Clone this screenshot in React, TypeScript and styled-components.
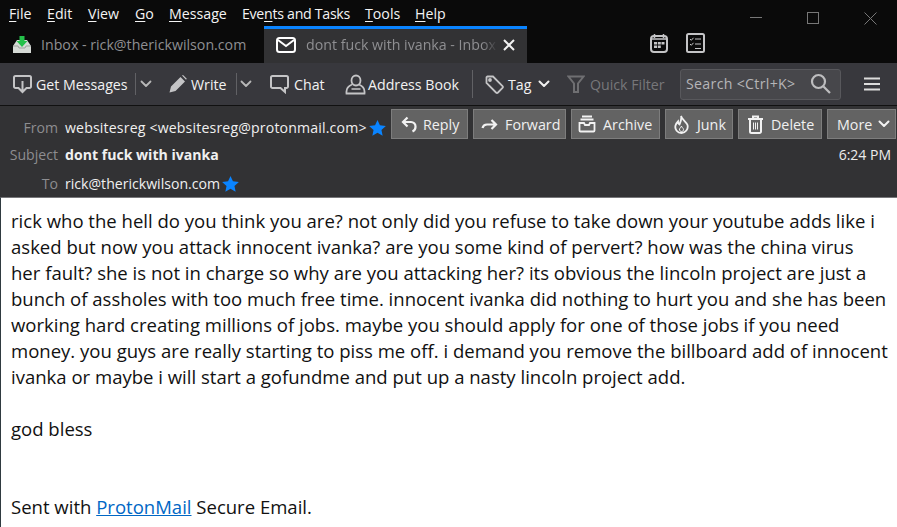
import React from "react";
import styled, { createGlobalStyle } from "styled-components";

const Global = createGlobalStyle`
  html, body { margin: 0; padding: 0; background: #fff; }
  body { font-family: "Open Sans", "Noto Sans", sans-serif; overflow: hidden; }
  #root { width: 897px; height: 527px; overflow: hidden; }
`;
const Shell = styled.div`width: 897px; height: 527px; display: flex; flex-direction: column; overflow: hidden;`;
const TopArea = styled.div`background: #0a0a0a; height: 63px; position: relative; flex: none;`;
const MenuBar = styled.div`height: 26px; display: flex; align-items: center; padding-left: 9px; color: #f4f4f4; font-size: 14.2px;`;
const MenuItem = styled.span<{ $w: number; $ls?: number }>`
  width: ${p => p.$w}px; flex: none; white-space: nowrap; letter-spacing: ${p => p.$ls ?? 0}px;
  u { text-underline-offset: 2px; text-decoration-thickness: 1px; }
`;
const WinButtons = styled.div`position: absolute; top: 12px; right: 20px; display: flex; gap: 45px; align-items: flex-start;`;
const TabRow = styled.div`height: 37px; display: flex; align-items: stretch; position: relative;`;
const Tab = styled.div<{ $active?: boolean }>`
  width: ${p => (p.$active ? "263px" : "264px")};
  display: flex; align-items: center; gap: 9px;
  padding: 0 0 3px 12px;
  box-sizing: border-box; font-size: 14.2px; white-space: nowrap; overflow: hidden; color: #8f8f92;
  background: ${p => (p.$active ? "#323234" : "transparent")};
  border-top: ${p => (p.$active ? "3px solid #0a84ff" : "3px solid transparent")};
`;
const TabText = styled.span`width: 193px; margin-left: 1px; overflow: hidden; flex: none; -webkit-mask-image: linear-gradient(to right, #000 176px, transparent 192px);`;
const TabClose = styled.span`display: flex; margin-left: -5px;`;
const Spaces = styled.div`position: absolute; left: 650px; top: 7px; display: flex; gap: 18px;`;
const Toolbar = styled.div`height: 42px; flex: none; background: #38383d; display: flex; align-items: center; color: #f2f2f2; font-size: 14.2px; border-bottom: 1px solid #111; padding-left: 13px;`;
const ToolButton = styled.div<{ $w: number; $dim?: boolean; $pl?: number; $gap?: number }>`
  width: ${p => p.$w}px; flex: none; box-sizing: border-box; display: flex; align-items: center; white-space: nowrap;
  padding-left: ${p => p.$pl ?? 0}px; gap: ${p => p.$gap ?? 3}px;
  color: ${p => (p.$dim ? "#77777a" : "inherit")};
`;
const Sep = styled.div<{ $h?: number }>`width: 1px; height: ${p => p.$h ?? 22}px; background: #616165; flex: none;`;
const Drop = styled.div<{ $w: number }>`width: ${p => p.$w}px; flex: none; display: flex; justify-content: center;`;
const TagChevron = styled.span`margin-left: 3px; display: flex;`;
const Search = styled.div`
  width: 161px; height: 31px; box-sizing: border-box; flex: none; background: #47474b; border: 1px solid #58585c; border-radius: 3px;
  display: flex; align-items: center; justify-content: space-between; padding: 0 9px 2px 5px; color: #b5b5b8; font-size: 14.2px; letter-spacing: 0.3px; white-space: nowrap;
`;
const Burger = styled.div`margin-left: 23px; display: flex;`;
const Header = styled.div`height: 91px; flex: none; box-sizing: border-box; padding-bottom: 2px; background: #323234; position: relative; display: grid; grid-template-columns: 58px 1fr; grid-template-rows: 33px 27px 29px; column-gap: 7px; font-size: 14.1px; color: #f0f0f0;`;
const Label = styled.div`text-align: right; color: #8d8d90; align-self: end; line-height: 20px; padding-bottom: 1px;`;
const Value = styled.div<{ $bold?: boolean; $spacing?: number }>`
  display: flex; align-items: center; gap: 2px; align-self: end; line-height: 20px; padding-bottom: 1px; white-space: nowrap;
  font-weight: ${p => (p.$bold ? 700 : 400)};
  letter-spacing: ${p => p.$spacing ?? 0}px;
`;
const Actions = styled.div`position: absolute; top: 3px; left: 391px; display: flex; gap: 5px;`;
const Action = styled.div<{ $w: number; $pl: number; $gap: number }>`
  width: ${p => p.$w}px; height: 30px; box-sizing: border-box; background: #636363; border: 1px solid #7d7d7d;
  display: flex; align-items: center; gap: ${p => p.$gap}px; padding-left: ${p => p.$pl}px; color: #f0f0f0; font-size: 14.3px; white-space: nowrap;
`;
const MoreChevron = styled.span`display: flex; margin-left: 6px;`;
const Time = styled.div`position: absolute; right: 6px; top: 39px; font-size: 14px; color: #ececec;`;
const Body = styled.div`flex: 1; background: #fff; border-left: 1px solid #2f3a40; padding: 10px 0 0 10px; color: #111; font-size: 18.55px; line-height: 25.98px; border-top: 1px solid #77777a;`;
const Line = styled.div`white-space: nowrap; min-height: 25.98px;`;
const Link = styled.a`color: #0067c5; text-decoration: underline;`;

const Star = () => (
  <svg width="17" height="16" viewBox="0 0 24 23"><path fill="#0a84ff" d="M12 0l3.5 7.7 8.5 1-6.3 5.7 1.7 8.4L12 18.5 4.6 22.8l1.7-8.4L0 8.7l8.5-1z" /></svg>
);
const Chevron = ({ c = "#cfcfcf", s = 1.8 }: { c?: string; s?: number }) => (
  <svg width="12" height="8" viewBox="0 0 12 8"><path d="M1.5 1.5 6 6l4.5-4.5" fill="none" stroke={c} strokeWidth={s} strokeLinecap="round" strokeLinejoin="round" /></svg>
);

const lines = [
  "rick who the hell do you think you are? not only did you refuse to take down your youtube adds like i",
  "asked but now you attack innocent ivanka? are you some kind of pervert? how was the china virus",
  "her fault? she is not in charge so why are you attacking her? its obvious the lincoln project are just a",
  "bunch of assholes with too much free time. innocent ivanka did nothing to hurt you and she has been",
  "working hard creating millions of jobs. maybe you should apply for one of those jobs if you need",
  "money. you guys are really starting to piss me off. i demand you remove the billboard add of innocent",
  "ivanka or maybe i will start a gofundme and put up a nasty lincoln project add.",
];
const ico = "#c4c4c6";

export default function App() {
  return (
    <Shell>
      <Global />
      <TopArea>
        <MenuBar>
          <MenuItem $w={38}><u>F</u>ile</MenuItem>
          <MenuItem $w={41}><u>E</u>dit</MenuItem>
          <MenuItem $w={47}><u>V</u>iew</MenuItem>
          <MenuItem $w={34}><u>G</u>o</MenuItem>
          <MenuItem $w={73}><u>M</u>essage</MenuItem>
          <MenuItem $w={123} $ls={-0.3}>Eve<u>n</u>ts and Tasks</MenuItem>
          <MenuItem $w={50}><u>T</u>ools</MenuItem>
          <MenuItem $w={40}><u>H</u>elp</MenuItem>
        </MenuBar>
        <WinButtons>
          <svg width="12" height="12" viewBox="0 0 12 12"><path d="M0 5.500h12" stroke="#777" /></svg>
          <svg width="12" height="12" viewBox="0 0 12 12"><rect x=".5" y=".5" width="11" height="11" fill="none" stroke="#777" /></svg>
          <svg width="13" height="13" viewBox="0 0 13 13"><path d="M.5.5l12 12M12.5.5l-12 12" stroke="#777" /></svg>
        </WinButtons>
        <TabRow>
          <Tab>
            <svg width="20" height="20" viewBox="0 0 20 20">
              <path d="M1 11l4-6h10l4 6v7H1z" fill="#d6dad6" />
              <path d="M1 11h5l1 2h6l1-2h5" fill="none" stroke="#9ea29e" />
              <path d="M7.500 1h5v5h3l-5.500 6-5.500-6h3z" fill="#24c04a" />
            </svg>
            <span>Inbox - rick@therickwilson.com</span>
          </Tab>
          <Tab $active>
            <svg width="20" height="16" viewBox="0 0 20 16">
              <rect x="1" y="1" width="18" height="14" rx="2.500" fill="none" stroke="#fff" strokeWidth="2" />
              <path d="M2 3l8 6 8-6" fill="none" stroke="#fff" strokeWidth="2" />
            </svg>
            <TabText>dont fuck with ivanka - Inbox</TabText>
            <TabClose>
              <svg width="12" height="12" viewBox="0 0 12 12"><path d="M1 1l10 10M11 1L1 11" stroke="#f2f2f2" strokeWidth="2" /></svg>
            </TabClose>
          </Tab>
          <Spaces>
            <svg width="18" height="20" viewBox="0 0 18 20">
              <rect x="1" y="3" width="16" height="16" rx="3" fill="none" stroke={ico} strokeWidth="2" />
              <path d="M1 6h16M4.500 1v4M13.500 1v4" stroke={ico} strokeWidth="1.500" />
              <path d="M4 9h3v2.500H4zM7.800 9h3v2.500h-3zM11.500 9h3v2.500h-3zM4 12.500h3V15H4zM7.800 12.500h3V15h-3z" fill={ico} />
            </svg>
            <svg width="19" height="20" viewBox="0 0 19 20">
              <rect x="1" y="1" width="17" height="18" rx="1.500" fill="none" stroke={ico} strokeWidth="2" />
              <path d="M4 6l1.300 1.300L7.500 4.800M4 11l1.300 1.300 2.200-2.500" fill="none" stroke={ico} />
              <path d="M9 6h6M9 11h6M9 15.500h6" stroke={ico} strokeWidth="1.200" />
            </svg>
          </Spaces>
        </TabRow>
      </TopArea>

      <Toolbar>
        <ToolButton $w={122} $gap={4}>
          <svg width="19" height="20" viewBox="0 0 19 20" fill="none" stroke={ico} strokeWidth="2">
            <path d="M6 14H2.500A1.500 1.500 0 0 1 1 12.500v-9A1.500 1.500 0 0 1 2.500 2h14A1.500 1.500 0 0 1 18 3.500v9a1.500 1.500 0 0 1-1.500 1.500H13" />
            <path d="M9.500 7v11M5.500 14l4 4 4-4" />
          </svg>
          <span>Get Messages</span>
        </ToolButton>
        <Sep />
        <Drop $w={20}><Chevron c="#b8b8b8" /></Drop>
        <ToolButton $w={80} $pl={12}>
          <svg width="20" height="20" viewBox="0 0 20 20">
            <path d="M1.500 18.500l1.500-6L12.500 3l4.500 4.500L7.500 17zM14 1.500l1-.5 3.800 3.800-.8 1z" fill={ico} />
          </svg>
          <span>Write</span>
        </ToolButton>
        <Sep />
        <Drop $w={18}><Chevron c="#b8b8b8" /></Drop>
        <ToolButton $w={90} $pl={14} $gap={4}>
          <svg width="21" height="20" viewBox="0 0 21 20" fill="none" stroke={ico} strokeWidth="2">
            <path d="M3.500 2h14A1.500 1.500 0 0 1 19 3.500v9a1.500 1.500 0 0 1-1.500 1.500H16v4l-4.500-4h-8A1.500 1.500 0 0 1 2 12.500v-9A1.500 1.500 0 0 1 3.500 2z" />
          </svg>
          <span>Chat</span>
        </ToolButton>
        <ToolButton $w={127} $gap={2}>
          <svg width="21" height="21" viewBox="0 0 21 21" fill="none" stroke={ico} strokeWidth="1.800">
            <ellipse cx="11" cy="6.500" rx="4.500" ry="5" />
            <path d="M7 10.500C3 12 1 15 1.500 19.500h18c.5-4.500-1.500-7.500-5.500-9" />
            <path d="M6.500 15h9" strokeWidth="1.500" />
          </svg>
          <span>Address Book</span>
        </ToolButton>
        <Sep $h={28} />
        <ToolButton $w={94} $pl={12} $gap={4}>
          <svg width="19" height="19" viewBox="0 0 19 19" fill="none" stroke={ico} strokeWidth="1.800">
            <path d="M1.500 2.500A1 1 0 0 1 2.500 1.500h5.500l9.500 9.500a1.500 1.500 0 0 1 0 2l-4.500 4.500a1.500 1.500 0 0 1-2 0L1.500 8z" />
            <circle cx="5" cy="5" r="1" fill={ico} />
          </svg>
          <span>Tag</span>
          <TagChevron><Chevron c="#f0f0f0" s={2} /></TagChevron>
        </ToolButton>
        <ToolButton $w={113} $dim $gap={5}>
          <svg width="18" height="18" viewBox="0 0 18 18" fill="none" stroke="#6f6f72" strokeWidth="2">
            <path d="M1.500 1.500h15L11 8.500V17H7V8.500z" />
          </svg>
          <span>Quick Filter</span>
        </ToolButton>
        <Search>
          <span>Search &lt;Ctrl+K&gt;</span>
          <svg width="21" height="21" viewBox="0 0 21 21" fill="none" stroke="#bdbdbf" strokeWidth="2.200">
            <circle cx="8.500" cy="8.500" r="6.500" />
            <path d="M13.500 13.500l6.500 6.500" />
          </svg>
        </Search>
        <Burger>
          <svg width="16" height="14" viewBox="0 0 16 14"><path d="M0 1.500h16M0 7h16M0 12.500h16" stroke="#dcdcdc" strokeWidth="2" /></svg>
        </Burger>
      </Toolbar>

      <Header>
        <Label>From</Label>
        <Value $spacing={0.17}>websitesreg &lt;websitesreg@protonmail.com&gt;<Star /></Value>
        <Label>Subject</Label>
        <Value $bold>dont fuck with ivanka</Value>
        <Label>To</Label>
        <Value>rick@therickwilson.com<Star /></Value>
        <Actions>
          <Action $w={77} $pl={9} $gap={5}>
            <svg width="17" height="17" viewBox="0 0 17 17" fill="none" stroke="#f2f2f2" strokeWidth="2.200"><path d="M6.500 1.500L2 6l4.500 4.500M2.500 6H10a4.500 4.500 0 0 1 4.500 4.500V11c0 1.800-1 3.500-3 4.500" /></svg>
            <span>Reply</span>
          </Action>
          <Action $w={93} $pl={7} $gap={7}>
            <svg width="17" height="13" viewBox="0 0 17 13" fill="none" stroke="#f2f2f2" strokeWidth="2.200"><path d="M10.500 2L15 6.500 10.500 11M14.500 6.500H6C3.500 6.500 2 8 1.500 10" /></svg>
            <span>Forward</span>
          </Action>
          <Action $w={89} $pl={6} $gap={7}>
            <svg width="18" height="18" viewBox="0 0 18 18" fill="none" stroke="#f2f2f2" strokeWidth="1.800"><path d="M4 1.500h10M2.500 4.500h13" /><path d="M1.500 8h4.500l1 2h4l1-2h4.500v7.500a1 1 0 0 1-1 1h-13a1 1 0 0 1-1-1z" /></svg>
            <span>Archive</span>
          </Action>
          <Action $w={68} $pl={8} $gap={8}>
            <svg width="15" height="19" viewBox="0 0 15 19" fill="none" stroke="#f2f2f2" strokeWidth="1.800"><path d="M7 1c.5 3 5 5.500 6.500 9 1 4-2 8-6 8s-7-3.500-6-7.500C2 8.500 3 7.500 4 6.500c0 1.500.5 2.500 1.500 3C6.500 7 8 4 7 1z" /><path d="M7.500 11c0 1.500 2 2 2 3.500S8.500 16.500 7.500 16.500 5 15.500 5.500 14c.4-1 1.500-1.500 2-3z" strokeWidth="1" /></svg>
            <span>Junk</span>
          </Action>
          <Action $w={84} $pl={8} $gap={7}>
            <svg width="17" height="19" viewBox="0 0 17 19" fill="none" stroke="#f2f2f2" strokeWidth="2"><path d="M1 4h15M6 3.500V1.500h5v2" /><path d="M3 4.500v12a1.500 1.500 0 0 0 1.500 1.500h8a1.500 1.500 0 0 0 1.500-1.500v-12" /><path d="M6.500 7.500v7M8.500 7.500v7M10.500 7.500v7" strokeWidth="1" /></svg>
            <span>Delete</span>
          </Action>
          <Action $w={69} $pl={9} $gap={0}>
            <span>More</span>
            <MoreChevron><Chevron c="#f2f2f2" s={2} /></MoreChevron>
          </Action>
        </Actions>
        <Time>6:24 PM</Time>
      </Header>

      <Body>
        {lines.map(l => <Line key={l}>{l}</Line>)}
        <Line />
        <Line>god bless</Line>
        <Line />
        <Line />
        <Line>Sent with <Link href="#">ProtonMail</Link> Secure Email.</Line>
      </Body>
    </Shell>
  );
}
